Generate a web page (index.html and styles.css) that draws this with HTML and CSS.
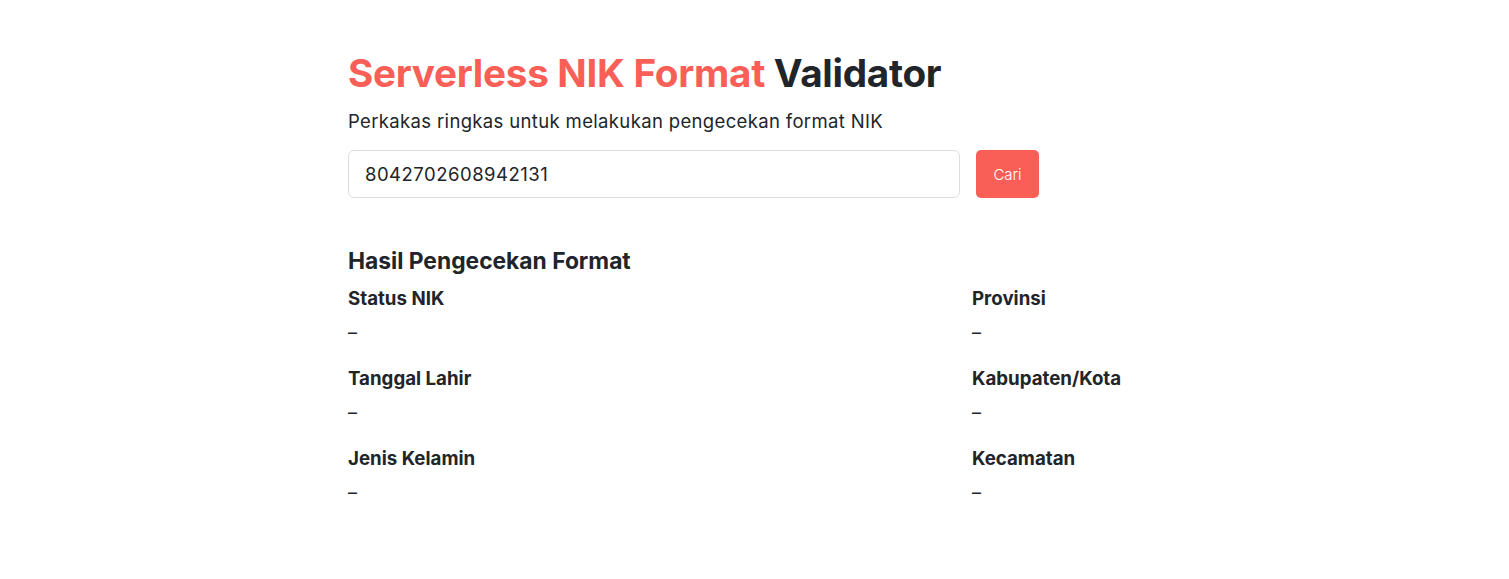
FILE: index.html
```html
<!DOCTYPE html>
<html lang="id">
<head>
  <meta charset="UTF-8" />
  <meta name="viewport" content="width=device-width, initial-scale=1.0"/>
  <title>Serverless NIK Format Validator</title>
  <link rel="stylesheet" href="styles.css">
</head>
<body>

  <main class="wrapper">
    <h1 class="title"><span class="accent">Serverless NIK Format</span> Validator</h1>
    <p class="subtitle">Perkakas ringkas untuk melakukan pengecekan format NIK</p>

    <form class="search" onsubmit="return false">
      <input type="text" id="nikInput" value="8042702608942131">
      <button type="submit">Cari</button>
    </form>

    <section class="result">
      <h2>Hasil Pengecekan Format</h2>
      <div class="result-grid">
        <div class="field">
          <h3>Status NIK</h3>
          <p>–</p>
        </div>
        <div class="field">
          <h3>Provinsi</h3>
          <p>–</p>
        </div>
        <div class="field">
          <h3>Tanggal Lahir</h3>
          <p>–</p>
        </div>
        <div class="field">
          <h3>Kabupaten/Kota</h3>
          <p>–</p>
        </div>
        <div class="field">
          <h3>Jenis Kelamin</h3>
          <p>–</p>
        </div>
        <div class="field">
          <h3>Kecamatan</h3>
          <p>–</p>
        </div>
      </div>
    </section>
  </main>

</body>
</html>
```

FILE: styles.css
```css
:root {
  --text-color: #212529;
  --accent: #fa5f57;
  --border: #dedede;
}

body {
  margin: 0;
  background: #ffffff;
  color: var(--text-color);
  font-family: 'Inter', 'Noto Sans', sans-serif;
}

.wrapper {
  width: 813px;
  margin: 0 auto;
  padding-top: 46px;
}

.title {
  font-size: 38.7px;
  font-weight: 700;
  letter-spacing: -0.3px;
  margin: 0;
  line-height: 54px;
}

.accent {
  color: var(--accent);
}

.subtitle {
  font-size: 18.5px;
  letter-spacing: 0.35px;
  margin: 8px 0 0;
  line-height: 26px;
}

.search {
  display: flex;
  gap: 16px;
  margin-top: 16px;
}

.search input {
  width: 612px;
  height: 48px;
  box-sizing: border-box;
  border: 1px solid var(--border);
  border-radius: 6px;
  padding: 0 16px;
  font-family: inherit;
  font-size: 18.5px;
  letter-spacing: 0.5px;
  color: var(--text-color);
}

.search input:focus {
  outline: none;
  border-color: var(--accent);
}

.search button {
  width: 63px;
  height: 48px;
  border: none;
  border-radius: 5px;
  background: var(--accent);
  color: #fff;
  font-family: inherit;
  font-size: 15px;
  font-weight: 300;
  cursor: pointer;
}

.result {
  margin-top: 46px;
}

.result h2 {
  font-size: 22.8px;
  font-weight: 700;
  margin: 0;
  line-height: 34px;
}

.result-grid {
  display: grid;
  grid-template-columns: 624px 1fr;
  row-gap: 16px;
  margin-top: 9px;
}

.field h3 {
  font-size: 18.7px;
  font-weight: 700;
  margin: 0;
  line-height: 24px;
}

.field p {
  margin: 4px 0 0;
  font-size: 18px;
  line-height: 36px;
}
```
